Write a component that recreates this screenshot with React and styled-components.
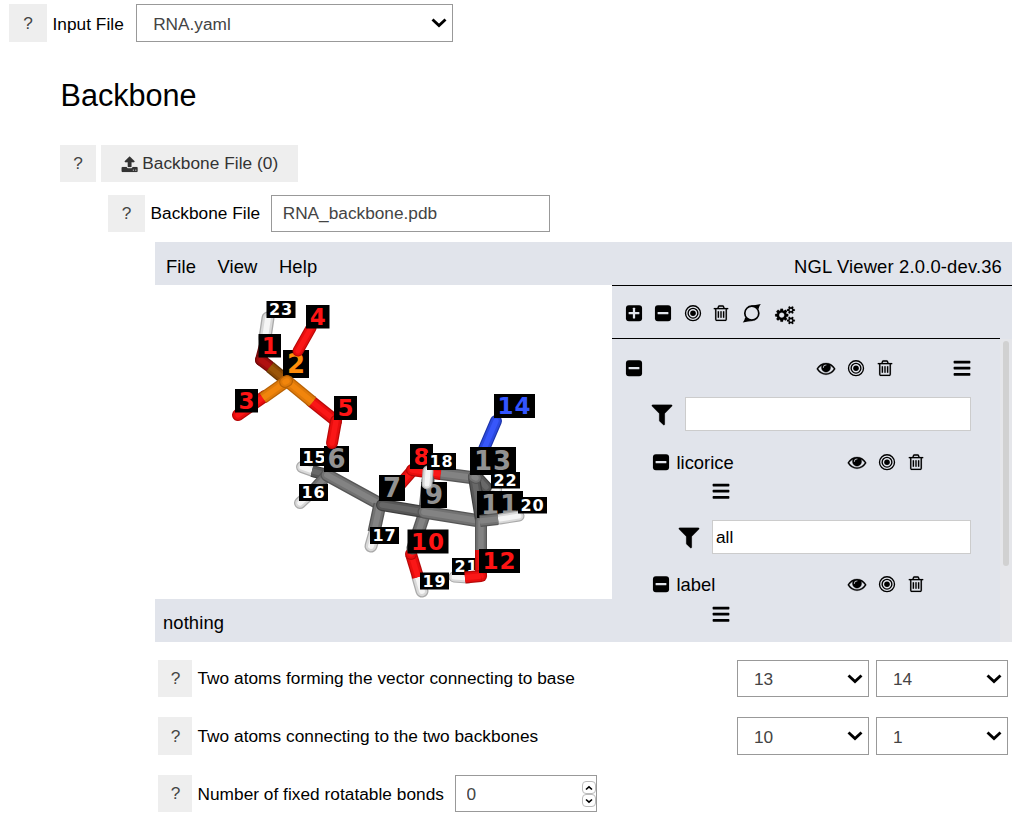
import React from "react";
import styled, { createGlobalStyle } from "styled-components";

const GlobalStyle = createGlobalStyle`
  *, *::before, *::after { box-sizing: border-box; }
  body {
    margin: 0;
    background: #fff;
    color: #000;
    font-family: "Liberation Sans", Arial, sans-serif;
    font-size: 17.25px;
    overflow: hidden;
  }
`;

const Page = styled.main`
  width: 1025px;
  height: 820px;
  padding-top: 4px;
  overflow: hidden;
`;

const Row = styled.div`
  display: flex;
  align-items: center;
  height: ${(p) => p.$h || 37}px;
  margin: ${(p) => p.$top || 0}px 0 0 ${(p) => p.$indent}px;
  width: ${(p) => (p.$w ? p.$w + "px" : "auto")};
`;

const Help = styled.button`
  flex: none;
  width: ${(p) => p.$w || 37}px;
  height: 100%;
  padding: 0 0 0 ${(p) => p.$nudge || 0}px;
  border: 0;
  background: #eee;
  color: #444;
  font: inherit;
  line-height: 37px;
`;

const Label = styled.label`
  margin-left: 5.5px;
  padding-bottom: ${(p) => p.$lift || 0}px;
  padding-top: ${(p) => p.$drop || 0}px;
  line-height: 20px;
  letter-spacing: 0.03px;
  white-space: nowrap;
`;

const Heading = styled.h2`
  margin: 34px 0 0 60.5px;
  height: 38px;
  line-height: 38px;
  font-size: 30.6px;
  font-weight: 400;
`;

const UploadButton = styled.button`
  display: flex;
  align-items: center;
  gap: 4.5px;
  width: 197px;
  height: 100%;
  margin-left: 5px;
  padding: 0 0 0 19.5px;
  border: 0;
  background: #eee;
  color: #333;
  font: inherit;
  letter-spacing: 0.05px;
  white-space: nowrap;
`;

const Field = styled.div`
  position: relative;
  flex: none;
  width: ${(p) => p.$w}px;
  height: 100%;
  margin-left: ${(p) => p.$ml || 0}px;
`;

const Input = styled.input`
  display: block;
  width: 100%;
  height: 100%;
  padding: ${(p) => p.$drop || 0}px 10.5px 0;
  border: 1px solid #999;
  border-radius: 0;
  background: #fff;
  color: #444;
  font: inherit;
  outline: none;
`;

const SelectBox = styled.select`
  appearance: none;
  display: block;
  width: 100%;
  height: 100%;
  padding: 1px 16px 0;
  border: 1px solid #999;
  border-radius: 0;
  background: #fff;
  color: #444;
  font: inherit;
`;

const SelectArrow = styled.svg`
  position: absolute;
  right: 6px;
  top: 13px;
  width: 16px;
  height: 11px;
  pointer-events: none;
`;

const PairFields = styled.div`
  display: flex;
  gap: 7px;
  height: 100%;
  margin-left: auto;
`;

const Spinner = styled.div`
  position: absolute;
  right: 1px;
  top: 6px;
  display: flex;
  flex-direction: column;
`;

const Step = styled.span`
  display: flex;
  align-items: center;
  justify-content: center;
  width: 14px;
  height: 13px;
  border: 1px solid #bbb;
  border-radius: 4px;
  background: #fff;
`;

const Viewer = styled.section`
  display: grid;
  grid-template: 43px 314px 43px / 457px 400px;
  width: 857px;
  margin: 10px 0 0 155px;
  background: #e1e4eb;
  font-size: 18.4px;
`;

const MenuBar = styled.header`
  grid-column: 1 / 3;
  display: flex;
  align-items: center;
  gap: 21.5px;
  padding: 7px 10px 0 11px;
  line-height: 20px;
  letter-spacing: 0.1px;
`;

const Version = styled.span`
  margin-left: auto;
  letter-spacing: 0.17px;
`;

const Stage = styled.svg`
  display: block;
  width: 457px;
  height: 314px;
  background: #fff;
`;

const Status = styled.footer`
  grid-column: 1;
  padding: 5px 8px 0;
  line-height: 38px;
  letter-spacing: 0.1px;
`;

const Sidebar = styled.aside`
  grid-column: 2;
  grid-row: 2 / 4;
  border-top: 1px solid #000;
`;

const Toolbar = styled.div`
  display: flex;
  align-items: center;
  gap: 9.2px;
  width: 388px;
  height: 53px;
  padding: 2px 0 0 12px;
  border-bottom: 1px solid #000;
`;

const Scroller = styled.div`
  display: flex;
  height: 303px;
`;

const Tree = styled.div`
  width: 388px;
  padding-top: 11px;
`;

const Track = styled.div`
  width: 12px;
  padding: 2px 3px;
  background: #e5e6ea;
`;

const Thumb = styled.div`
  height: 225px;
  border-radius: 3px;
  background: #d1d1d1;
`;

const TreeRow = styled.div`
  display: flex;
  align-items: center;
  height: ${(p) => p.$h}px;
  margin-bottom: ${(p) => p.$mb || 0}px;
  padding-top: ${(p) => p.$pt || 0}px;
  padding-left: ${(p) => p.$indent}px;
`;

const Name = styled.span`
  flex: none;
  width: ${(p) => p.$w}px;
  padding-left: 6px;
  padding-top: 1px;
  line-height: 22px;
`;

const Actions = styled.div`
  display: flex;
  align-items: center;
  gap: 10.4px;
`;

const Selection = styled.input`
  width: ${(p) => p.$w}px;
  height: 34px;
  margin-left: 10px;
  padding: 0 3px;
  border: 1px solid #ccc;
  background: #fff;
  color: #000;
  font: inherit;
  font-size: 17.25px;
`;

const Glyph = styled.svg`
  flex: none;
  display: block;
  width: ${(p) => p.$w || 20}px;
  height: ${(p) => p.$h || 18.4}px;
  margin-left: ${(p) => p.$ml || 0}px;
  margin-top: ${(p) => p.$mt || 0}px;
  overflow: visible;
`;

const paths = {
  trash:
    "M704 736v576q0 14-9 23t-23 9h-64q-14 0-23-9t-9-23v-576q0-14 9-23t23-9h64q14 0 23 9t9 23zm256 0v576q0 14-9 23t-23 9h-64q-14 0-23-9t-9-23v-576q0-14 9-23t23-9h64q14 0 23 9t9 23zm256 0v576q0 14-9 23t-23 9h-64q-14 0-23-9t-9-23v-576q0-14 9-23t23-9h64q14 0 23 9t9 23zm128 724v-948h-896v948q0 22 7 40.5t14.5 27 10.5 8.5h832q3 0 10.5-8.5t14.5-27 7-40.5zm-672-1076h448l-48-117q-7-9-17-11h-317q-10 2-17 11zm928 32v64q0 14-9 23t-23 9h-96v948q0 83-47 143.5t-113 60.5h-832q-66 0-113-58.5t-47-141.5v-952h-96q-14 0-23-9t-9-23v-64q0-14 9-23t23-9h309l70-167q15-37 54-63t79-26h320q40 0 79 26t54 63l70 167h309q14 0 23 9t9 23z",
  eye: "M1664 960q-152-236-381-353 61 104 61 225 0 185-131.5 316.5t-316.5 131.5-316.5-131.5-131.5-316.5q0-121 61-225-229 117-381 353 133 205 333.5 326.5t434.5 121.5 434.5-121.5 333.5-326.5zm-720-384q0-20-14-34t-34-14q-125 0-214.5 89.5t-89.5 214.5q0 20 14 34t34 14 34-14 14-34q0-86 61-147t147-61q20 0 34-14t14-34zm848 384q0 34-20 69-140 230-376.5 368.5t-499.5 138.5-499.5-139-376.5-368q-20-35-20-69t20-69q140-229 376.5-368t499.5-139 499.5 139 376.5 368q20 35 20 69z",
  upload:
    "M1344 1472q0-26-19-45t-45-19-45 19-19 45 19 45 45 19 45-19 19-45zm256 0q0-26-19-45t-45-19-45 19-19 45 19 45 45 19 45-19 19-45zm128-224v320q0 40-28 68t-68 28h-1472q-40 0-68-28t-28-68v-320q0-40 28-68t68-28h427q21 56 70.5 92t110.5 36h256q61 0 110.5-36t70.5-92h427q40 0 68 28t28 68zm-325-648q-17 40-59 40h-256v448q0 26-19 45t-45 19h-256q-26 0-45-19t-19-45v-448h-256q-42 0-59-40-17-39 14-69l448-448q18-19 45-19t45 19l448 448q31 30 14 69z",
  filter:
    "M1595 295q17 41-14 70l-493 493v742q0 42-39 59-13 5-25 5-27 0-45-19l-256-256q-19-19-19-45v-486l-493-493q-31-29-14-70 17-39 59-39h1280q42 0 59 39z",
  cogs: "M896 896q0-106-75-181t-181-75-181 75-75 181 75 181 181 75 181-75 75-181zm768 512q0-52-38-90t-90-38-90 38-38 90q0 53 37.5 90.5t90.5 37.5 90.5-37.5 37.5-90.5zm0-1024q0-52-38-90t-90-38-90 38-38 90q0 53 37.5 90.5t90.5 37.5 90.5-37.5 37.5-90.5zm-384 421v185q0 10-7 19.5t-16 10.5l-155 24q-11 35-32 76 34 48 90 115 7 10 7 20 0 12-7 19-23 30-82.5 89.5t-78.5 59.5q-11 0-21-7l-115-90q-37 19-77 31-11 108-23 155-7 24-30 24h-186q-11 0-20-7.5t-10-17.5l-23-153q-34-10-75-31l-118 89q-7 7-20 7-11 0-21-8-144-133-144-160 0-9 7-19 10-14 41-53t47-61q-23-44-35-82l-152-24q-10-1-17-9.5t-7-19.5v-185q0-10 7-19.5t16-10.5l155-24q11-35 32-76-34-48-90-115-7-11-7-20 0-12 7-20 22-30 82-89t79-59q11 0 21 7l115 90q34-18 77-32 11-108 23-154 7-24 30-24h186q11 0 20 7.5t10 17.5l23 153q34 10 75 31l118-89q8-7 20-7 11 0 21 8 144 133 144 160 0 9-7 19-12 16-42 54t-45 60q23 48 34 82l152 23q10 2 17 10.5t7 19.5zm640 533v140q0 16-149 31-12 27-30 52 51 113 51 138 0 4-4 7-122 71-124 71-8 0-46-47t-52-68q-20 2-30 2t-30-2q-14 21-52 68t-46 47q-2 0-124-71-4-3-4-7 0-25 51-138-18-25-30-52-149-15-149-31v-140q0-16 149-31 13-29 30-52-51-113-51-138 0-4 4-7 4-2 35-20t59-34 30-16q8 0 46 46.5t52 67.5q20-2 30-2t30 2q51-71 92-112l6-2q4 0 124 70 4 3 4 7 0 25-51 138 17 23 30 52 149 15 149 31zm0-1024v140q0 16-149 31-12 27-30 52 51 113 51 138 0 4-4 7-122 71-124 71-8 0-46-47t-52-68q-20 2-30 2t-30-2q-14 21-52 68t-46 47q-2 0-124-71-4-3-4-7 0-25 51-138-18-25-30-52-149-15-149-31v-140q0-16 149-31 13-29 30-52-51-113-51-138 0-4 4-7 4-2 35-20t59-34 30-16q8 0 46 46.5t52 67.5q20-2 30-2t30 2q51-71 92-112l6-2q4 0 124 70 4 3 4 7 0 25-51 138 17 23 30 52 149 15 149 31z",
};

const PathIcon = ({ name, vw = 1792, weight = 14, ...rest }) => (
  <Glyph
    viewBox={`0 0 ${vw} 1792`}
    fill="currentColor"
    stroke="currentColor"
    strokeWidth={weight}
    {...rest}
  >
    <path d={paths[name]} />
  </Glyph>
);

const SquareIcon = ({ plus, ...rest }) => (
  <Glyph viewBox="0 0 1792 1792" {...rest}>
    <rect x="110" y="110" width="1572" height="1572" rx="288" />
    <rect x="370" y="780" width="1052" height="220" rx="50" fill="#e1e4eb" />
    {plus && <rect x="786" y="370" width="220" height="1052" rx="50" fill="#e1e4eb" />}
  </Glyph>
);

const TargetIcon = (props) => (
  <Glyph viewBox="0 0 1792 1792" fill="none" stroke="#000" strokeWidth="132" {...props}>
    <circle cx="896" cy="896" r="730" />
    <circle cx="896" cy="896" r="475" />
    <circle cx="896" cy="896" r="270" fill="#000" stroke="none" />
  </Glyph>
);

const BarsIcon = (props) => (
  <Glyph viewBox="0 0 1792 1792" {...props}>
    <rect x="80" y="170" width="1632" height="260" rx="64" />
    <rect x="80" y="766" width="1632" height="260" rx="64" />
    <rect x="80" y="1362" width="1632" height="260" rx="64" />
  </Glyph>
);

const OrbitIcon = () => (
  <Glyph viewBox="0 0 20 18.4" $ml={1}>
    <circle cx="9.8" cy="9.2" r="7" fill="none" stroke="#000" strokeWidth="1.7" />
    <path d="M8.5 1.4Q13.5 1.2 18.8 0Q16.8 2.4 16.4 5.2Q13.5 2.2 8.5 1.4Z" />
    <path d="M11.1 17Q6.1 17.2 0.8 18.4Q2.8 16 3.2 13.2Q6.1 16.2 11.1 17Z" />
  </Glyph>
);

const RowActions = () => (
  <Actions>
    <PathIcon name="eye" weight={28} />
    <TargetIcon />
    <PathIcon name="trash" $ml={-1} />
  </Actions>
);

const Select = ({ value, ...rest }) => (
  <Field {...rest}>
    <SelectBox defaultValue={value}>
      <option>{value}</option>
    </SelectBox>
    <SelectArrow viewBox="0 0 16 11" fill="none" stroke="#000" strokeWidth="2.8">
      <path d="M1.5 2.4L8 8.6L14.5 2.4" />
    </SelectArrow>
  </Field>
);

const tones = {
  grey: ["#565656", "#727272", "#838383"],
  dark: ["#404040", "#575757", "#686868"],
  red: ["#b80909", "#e80e0e", "#fa1717"],
  maroon: ["#750909", "#9b0c0c", "#b01010"],
  orange: ["#b86205", "#df7a0a", "#f1850c"],
  brown: ["#643604", "#8b4a05", "#9b5609"],
  white: ["#aaaaaa", "#d9d9d9", "#f5f5f5"],
  blue: ["#1d34aa", "#2b49df", "#3857fa"],
};

// Each stick is [tone, x1, y1, x2, y2, width, cap].
const Sticks = ({ items }) =>
  items.map(([tone, x1, y1, x2, y2, w = 12, cap = "round"], i) => (
    <g key={i} strokeLinecap={cap}>
      <line x1={x1} y1={y1} x2={x2} y2={y2} stroke={tones[tone][0]} strokeWidth={w} />
      <line x1={x1} y1={y1} x2={x2} y2={y2} stroke={tones[tone][1]} strokeWidth={w * 0.8} />
      <line x1={x1} y1={y1} x2={x2} y2={y2} stroke={tones[tone][2]} strokeWidth={w * 0.45} />
    </g>
  ));

// Each tag is [text, x, y, width, height, colour, font size].
const Tags = ({ items }) =>
  items.map(([text, x, y, w, h, color, size]) => (
    <g key={text}>
      <rect x={x} y={y} width={w} height={h} fill="#000" />
      <text
        x={x + w / 2}
        y={y + h / 2 + size * 0.365}
        textAnchor="middle"
        fill={color}
        fontFamily='"DejaVu Sans", sans-serif'
        fontWeight="700"
        fontSize={size}
        letterSpacing={text.length > 1 ? 0.9 : 0}
      >
        {text}
      </text>
    </g>
  ));

const R = "#ff1414";
const G = "#929292";
const W = "#ffffff";

const backSticks = [
  ["white", 268, 318, 265, 338, 13],
  ["maroon", 265, 345, 261, 360, 12],
  ["maroon", 261, 360, 269, 366, 12],
  ["brown", 270, 367, 287, 381, 12, "butt"],
  ["white", 316, 472, 302, 467, 12],
  ["dark", 328, 475, 312, 471, 12, "butt"],
  ["white", 314, 490, 300, 503, 12],
  ["grey", 328, 474, 311, 493, 12, "butt"],
  ["grey", 327, 475, 380, 504, 13],
  ["white", 375, 532, 371, 546, 13],
  ["grey", 380, 504, 374, 532, 13, "butt"],
  ["dark", 388, 499, 398, 488, 12],
  ["red", 412, 471, 398, 487, 12],
  ["red", 412, 470, 440, 474, 12],
  ["grey", 441, 473.5, 475, 478, 13, "butt"],
  ["white", 490, 487, 498, 490, 8],
  ["dark", 476, 476, 486, 487, 12],
  ["grey", 428, 480, 425, 512, 13],
  ["white", 418, 577, 422, 591, 13],
  ["red", 411, 554, 418, 577, 12, "butt"],
  ["red", 411, 554, 411.1, 554, 12],
  ["grey", 425, 512, 413, 548, 13],
  ["dark", 382, 505, 424, 512, 12],
  ["grey", 424, 512, 480, 521, 13],
  ["dark", 474, 477, 481, 520, 12],
  ["grey", 474, 477, 476, 478, 12],
  ["blue", 496, 421, 484, 449, 12],
  ["grey", 481, 521, 481, 550, 12],
  ["white", 468, 578, 454, 577, 11],
];

const middleTags = [
  ["2", 283, 350, 26, 28, "#ff8c0a", 26],
  ["15", 300, 448, 29, 18, W, 16],
  ["6", 324, 446, 25, 26, G, 26],
  ["7", 379, 475, 26, 26, G, 26],
  ["8", 410, 444, 23, 25, R, 23],
  ["9", 421, 482, 26, 26, G, 26],
  ["13", 470, 447, 46, 28, G, 26],
  ["11", 477, 491, 46, 27, G, 26],
  ["21", 452, 558, 29, 17, W, 16],
];

const frontSticks = [
  ["red", 265, 396, 238, 415, 12],
  ["red", 311, 401, 336, 421, 12],
  ["orange", 287, 381, 263, 398, 12, "butt"],
  ["orange", 287, 381, 312.5, 402, 12, "butt"],
  ["orange", 285, 382, 287, 381, 12],
  ["red", 336, 421, 332, 443, 12],
  ["red", 298, 351, 311, 328, 11],
  ["white", 428, 471, 427, 484, 11],
  ["white", 500, 519, 519, 516, 11],
  ["grey", 480, 521, 498, 519, 12, "butt"],
  ["red", 481, 550, 481, 576, 12, "butt"],
  ["red", 481, 576, 481.1, 576, 12],
  ["red", 481, 576, 465, 577.5, 12, "butt"],
];

const frontTags = [
  ["23", 266.5, 301, 29, 17, W, 16],
  ["1", 258.5, 334, 22.5, 23.5, R, 23],
  ["4", 306, 305, 23.5, 23.5, R, 23],
  ["3", 235, 389, 23, 23.5, R, 23],
  ["5", 334, 396, 23, 24, R, 23],
  ["16", 299, 484, 29, 17, W, 16],
  ["17", 370, 527, 29, 17, W, 16],
  ["18", 427, 453, 29, 17, W, 16],
  ["14", 494, 394, 41, 24, "#3355ff", 23],
  ["22", 491, 472, 29, 16.5, W, 16],
  ["20", 518, 497, 29, 16.5, W, 16],
  ["10", 407.5, 529.5, 41, 24, R, 23],
  ["12", 479, 549, 41, 24, R, 23],
  ["19", 420, 572.5, 29, 17, W, 16],
];

const Molecule = () => (
  <Stage viewBox="155 285 457 314">
    <Sticks items={backSticks} />
    <Tags items={middleTags} />
    <Sticks items={frontSticks} />
    <Tags items={frontTags} />
  </Stage>
);

const Representation = ({ name, barsHeight = 26 }) => (
  <>
    <TreeRow $h={32} $indent={38.5}>
      <SquareIcon />
      <Name $w={176}>{name}</Name>
      <RowActions />
    </TreeRow>
    <TreeRow $h={barsHeight} $indent={98.5}>
      <BarsIcon />
    </TreeRow>
  </>
);

const AtomPair = ({ label, lift, top, h, values }) => (
  <Row $indent={158} $top={top} $h={h} $w={850}>
    <Help $w={34} $nudge={1}>?</Help>
    <Label $lift={lift}>{label}</Label>
    <PairFields>
      {values.map((v) => (
        <Select key={v} value={v} $w={132} />
      ))}
    </PairFields>
  </Row>
);

export default function App() {
  return (
    <Page>
      <GlobalStyle />
      <Row $indent={9} $h={38}>
        <Help $w={38}>?</Help>
        <Label $drop={2}>Input File</Label>
        <Select value="RNA.yaml" $w={317} $ml={12.4} />
      </Row>

      <Heading>Backbone</Heading>

      <Row $indent={60} $top={31}>
        <Help $w={36}>?</Help>
        <UploadButton>
          <PathIcon name="upload" $w={17.25} $h={17.25} $mt={2} />
          Backbone File (0)
        </UploadButton>
      </Row>
      <Row $indent={108} $top={13}>
        <Help>?</Help>
        <Label $lift={1}>Backbone File</Label>
        <Field $w={279} $ml={11}>
          <Input defaultValue="RNA_backbone.pdb" />
        </Field>
      </Row>

      <Viewer>
        <MenuBar>
          <span>File</span>
          <span>View</span>
          <span>Help</span>
          <Version>NGL Viewer 2.0.0-dev.36</Version>
        </MenuBar>
        <Molecule />
        <Status>nothing</Status>
        <Sidebar>
          <Toolbar>
            <SquareIcon plus />
            <SquareIcon />
            <TargetIcon $ml={0.4} />
            <PathIcon name="trash" $ml={-0.5} />
            <OrbitIcon />
            <PathIcon name="cogs" vw={1920} $ml={4} $mt={4} />
          </Toolbar>
          <Scroller>
            <Tree>
              <TreeRow $h={36} $indent={12}>
                <SquareIcon />
                <Name $w={171.5} />
                <RowActions />
                <BarsIcon $ml={56.4} />
              </TreeRow>
              <TreeRow $h={56} $indent={37} $mb={4}>
                <PathIcon name="filter" $w={26} $h={26} />
                <Selection $w={286} defaultValue="" />
              </TreeRow>
              <Representation name="licorice" />
              <TreeRow $h={64} $indent={64} $pt={2}>
                <PathIcon name="filter" $w={26} $h={26} />
                <Selection $w={259} defaultValue="all" />
              </TreeRow>
              <Representation name="label" barsHeight={28} />
            </Tree>
            <Track>
              <Thumb />
            </Track>
          </Scroller>
        </Sidebar>
      </Viewer>

      <AtomPair
        label="Two atoms forming the vector connecting to base"
        lift={1}
        top={18}
        h={37}
        values={["13", "14"]}
      />
      <AtomPair
        label="Two atoms connecting to the two backbones"
        top={20}
        h={38}
        values={["10", "1"]}
      />
      <Row $indent={158} $top={20}>
        <Help $w={34} $nudge={1}>?</Help>
        <Label>Number of fixed rotatable bonds</Label>
        <Field $w={142} $ml={11.2}>
          <Input defaultValue="0" $drop={1} />
          <Spinner>
            <Step>
              <svg width="8" height="6" fill="none" stroke="#000" strokeWidth="1.6">
                <path d="M1 4.5L4 1.8L7 4.5" />
              </svg>
            </Step>
            <Step>
              <svg width="8" height="6" fill="none" stroke="#000" strokeWidth="1.6">
                <path d="M1 1.5L4 4.2L7 1.5" />
              </svg>
            </Step>
          </Spinner>
        </Field>
      </Row>
    </Page>
  );
}
